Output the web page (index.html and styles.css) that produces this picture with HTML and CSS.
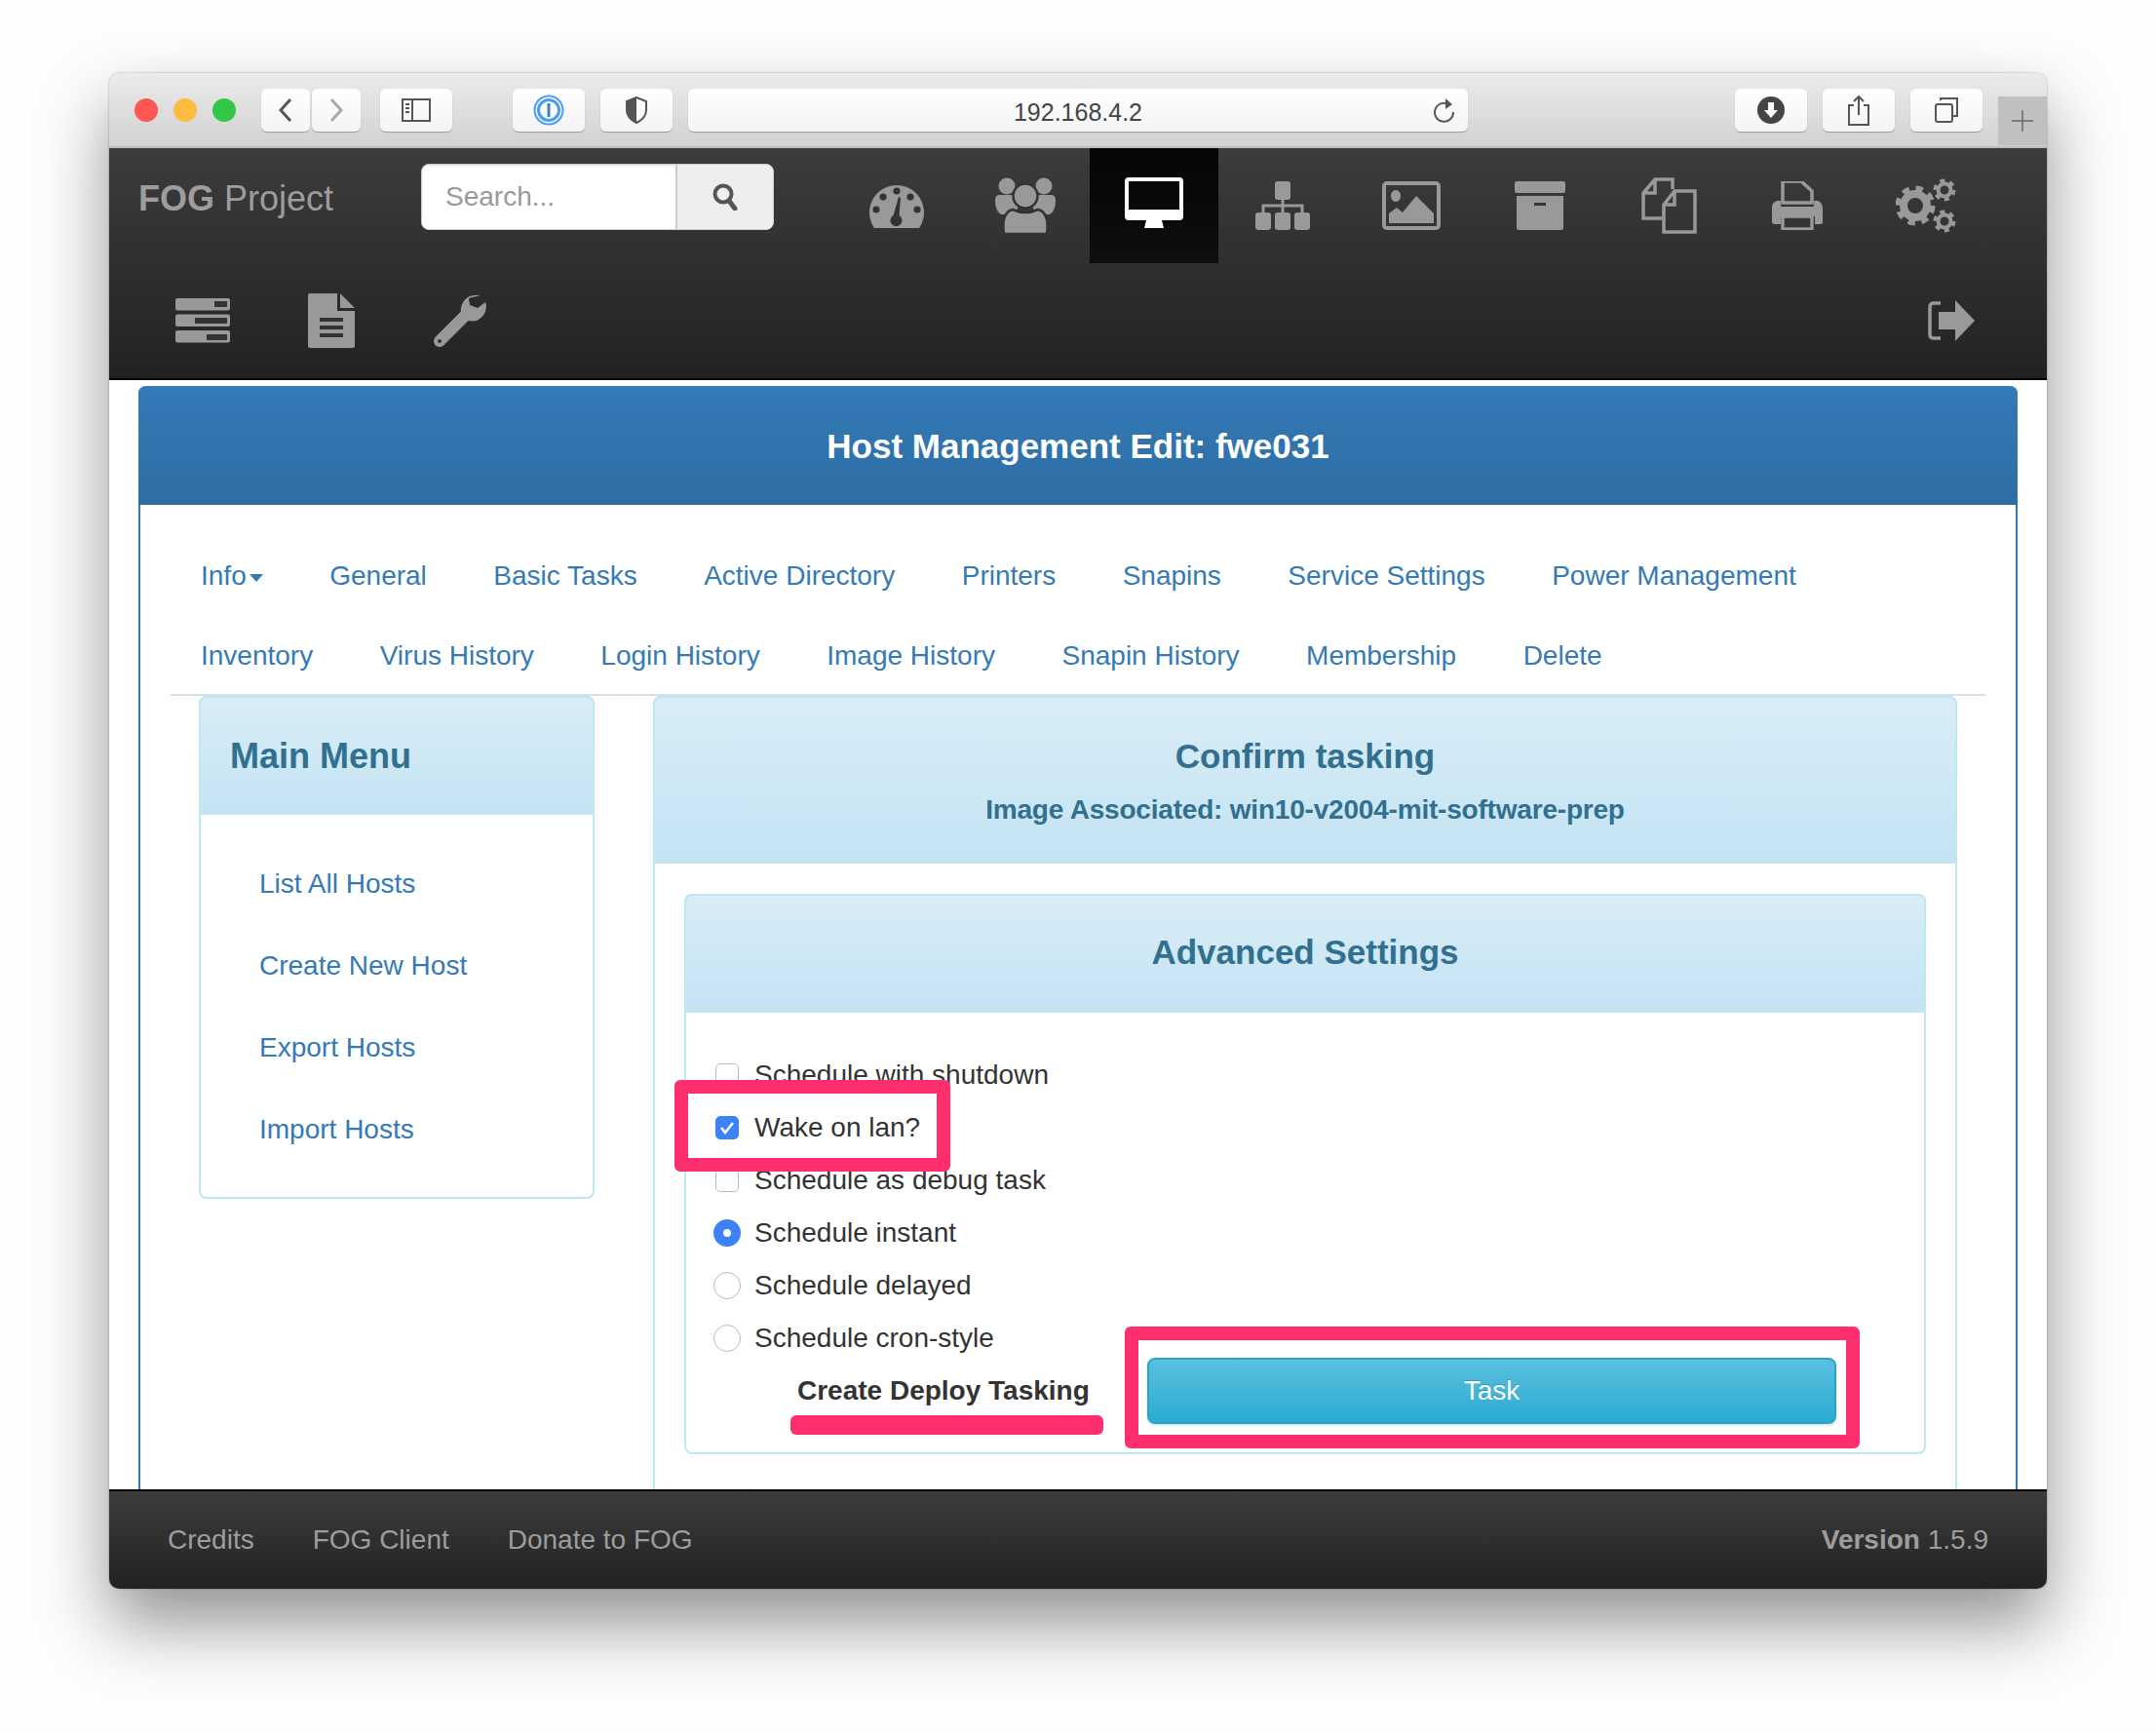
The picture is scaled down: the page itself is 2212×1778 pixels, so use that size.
FILE: index.html
```html
<!DOCTYPE html>
<html>
  <head>
    <title>FOG Project</title>
    <meta charset="utf-8">
    <link rel="stylesheet" href="styles.css">
  </head>
  <body>
    <div class="window">

      <div class="toolbar">
        <span class="light red"></span>
        <span class="light yellow"></span>
        <span class="light green"></span>
        <span class="tool back"><svg width="16" height="26" viewBox="0 0 16 26"><path d="M13 2 3 13l10 11" class="line"/></svg></span>
        <span class="tool forward"><svg width="16" height="26" viewBox="0 0 16 26"><path d="M3 2l10 11L3 24" class="line faint"/></svg></span>
        <span class="tool sidebar"><svg width="30" height="24" viewBox="0 0 30 24"><rect x="1" y="1" width="28" height="22" class="line thin"/><path d="M11 1v22" class="line thin"/><path d="M4 6h4M4 10h4M4 14h4" class="line thin"/></svg></span>
        <span class="tool onepass"><svg width="32" height="32" viewBox="0 0 32 32"><circle cx="16" cy="16" r="14.5" fill="none" stroke="#4a9cf5" stroke-width="2"/><circle cx="16" cy="16" r="10.5" fill="none" stroke="#4a9cf5" stroke-width="3"/><rect x="14.5" y="9" width="3" height="14" fill="#3b82d6"/></svg></span>
        <span class="tool shield"><svg width="24" height="28" viewBox="0 0 24 28"><path d="M12 1 2 5v9c0 6 4 10 10 13 6-3 10-7 10-13V5z" fill="none" stroke="#555" stroke-width="2"/><path d="M12 1 2 5v9c0 6 4 10 10 13z" fill="#555"/></svg></span>
        <span class="address">192.168.4.2
          <svg class="reload" width="24" height="26" viewBox="0 0 24 26"><path d="M17 7.5A9.5 9.5 0 1 0 21 15" class="line thin"/><path d="M13 1l7 6-7 5z" fill="#555"/></svg>
        </span>
        <span class="tool download"><svg width="28" height="28" viewBox="0 0 28 28"><circle cx="14" cy="14" r="14" fill="#444"/><path d="M11 6h6v8h4l-7 8-7-8h4z" fill="#fff"/></svg></span>
        <span class="tool share"><svg width="24" height="32" viewBox="0 0 24 32"><path d="M7 11H2v20h20V11h-5M12 21V2M7 7l5-5 5 5" class="line thin"/></svg></span>
        <span class="tool tabs"><svg width="26" height="26" viewBox="0 0 26 26"><rect x="2" y="7" width="17" height="18" rx="2" class="line thin"/><path d="M7 3V1h17v18h-4" class="line thin"/></svg></span>
        <span class="newtab"><svg width="22" height="22" viewBox="0 0 22 22"><path d="M11 0v22M0 11h22" stroke="#666" stroke-width="1.5"/></svg></span>
      </div>

      <nav class="topnav">
        <div class="nav-row">
          <a class="brand"><b>FOG</b> Project</a>
          <div class="search">
            <input type="text" placeholder="Search...">
            <span class="search-btn"><svg width="26" height="28" viewBox="0 0 26 28"><circle cx="11" cy="11" r="8.5" fill="none" stroke="#555" stroke-width="4"/><path d="M17 18l6 8" stroke="#555" stroke-width="5" stroke-linecap="round"/></svg></span>
          </div>
          <ul class="icons">
            <li><svg width="56" height="46" viewBox="0 0 56 46"><path d="M5 46A28 28 0 1 1 51 46z" class="ico"/><g class="hole"><circle cx="28" cy="8" r="3.6"/><circle cx="14" cy="14" r="3.6"/><circle cx="42" cy="14" r="3.6"/><circle cx="7" cy="27" r="3.6"/><circle cx="49" cy="27" r="3.6"/><path d="M30 14l2 1-1.500 18a6 6 0 1 1-6 0z"/></g></svg></li>
            <li><svg width="62" height="58" viewBox="0 0 62 58"><g class="ico"><circle cx="12" cy="9" r="8.500"/><circle cx="50" cy="9" r="8.500"/><path d="M0 24q0-6 4-6h16q8 6 0 20H6q-6-4-6-14zM62 24q0-6-4-6H42q-8 6 0 20h14q6-4 6-14z"/></g><g class="ico people-front"><circle cx="31" cy="19" r="12.500"/><path d="M9 58Q6 36 18 33 31 39 44 33 56 36 53 58z"/></g></svg></li>
            <li class="active"><svg width="60" height="52" viewBox="0 0 60 52"><path fill-rule="evenodd" d="M4 0h52q4 0 4 4v36q0 4-4 4H38l2 8H20l2-8H4q-4 0-4-4V4q0-4 4-4zM4 4v29h52V4z" fill="#fff"/></svg></li>
            <li><svg width="56" height="50" viewBox="0 0 56 50"><g class="ico"><rect x="20" y="0" width="16" height="19" rx="3"/><rect x="0" y="32" width="16" height="18" rx="3"/><rect x="20" y="32" width="16" height="18" rx="3"/><rect x="40" y="32" width="16" height="18" rx="3"/></g><path d="M28 18v14M8 32v-7h40v7" fill="none" stroke="#999" stroke-width="3"/></svg></li>
            <li><svg width="60" height="50" viewBox="0 0 60 50"><rect x="2" y="2" width="56" height="46" rx="3" fill="none" stroke="#999" stroke-width="4"/><g class="ico"><ellipse cx="14" cy="15" rx="5" ry="6"/><path d="M7 43V33l8-6 6 5 14-17 18 18v10z"/></g></svg></li>
            <li><svg width="52" height="50" viewBox="0 0 52 50"><g class="ico"><rect x="0" y="0" width="52" height="12" rx="2"/><path fill-rule="evenodd" d="M2 15h48v33q0 2-2 2H4q-2 0-2-2zM20 22v3h12v-3z"/></g></svg></li>
            <li><svg width="57" height="58" viewBox="0 0 57 58"><path d="M32 12V2H14L2 16v26h19M14 2v14H2" class="ico-line"/><path d="M34 14h21v42H23V28zM34 14v14H23" class="ico-line"/></svg></li>
            <li><svg width="52" height="50" viewBox="0 0 52 50"><path d="M11 0h19l11 10v12H11z" class="ico-line" stroke-width="3"/><path fill-rule="evenodd" d="M5 20h4v6h34v-6h4q5 2 5 8v14q0 2-3 2h-5v-8H9v8H4q-4 0-4-2V26q0-4 5-6z" class="ico"/><path d="M11 36h30v13H11z" class="ico-line" stroke-width="3"/></svg></li>
            <li><svg width="62" height="58" viewBox="0 0 62 58"><g fill="none" stroke="#999"><circle cx="20" cy="29" r="17" stroke-width="7" stroke-dasharray="7 6.350"/><circle cx="20" cy="29" r="12" stroke-width="8"/><circle cx="50" cy="13" r="9.500" stroke-width="4" stroke-dasharray="5 4.950"/><circle cx="50" cy="13" r="6.500" stroke-width="4"/><circle cx="50" cy="45" r="9.500" stroke-width="4" stroke-dasharray="5 4.950"/><circle cx="50" cy="45" r="6.500" stroke-width="4"/></g></svg></li>
          </ul>
        </div>
        <div class="nav-row">
          <ul class="icons">
            <li><svg width="56" height="46" viewBox="0 0 56 46"><g class="ico"><rect y="0" width="56" height="12.500" rx="2"/><rect y="16.500" width="56" height="12.500" rx="2"/><rect y="33" width="56" height="12.500" rx="2"/></g><g class="hole"><rect x="40" y="3" width="13" height="6"/><rect x="20" y="20" width="33" height="6"/><rect x="32" y="37" width="21" height="6"/></g></svg></li>
            <li><svg width="48" height="56" viewBox="0 0 48 56"><path d="M2 0h28v18h18v36q0 2-2 2H2q-2 0-2-2V2q0-2 2-2zM33 0l15 15H33z" class="ico"/><g class="hole"><rect x="12" y="25" width="24" height="4"/><rect x="12" y="33" width="24" height="4"/><rect x="12" y="41" width="24" height="4"/></g></svg></li>
            <li><svg width="54" height="54" viewBox="0 0 54 54"><path d="M6 48 32 22" stroke="#999" stroke-width="12" stroke-linecap="round"/><path d="M48 1Q34-1 29 10q-3 8 1 14 8 6 16 2 8-5 8-15l-1-3-8 6-8-3-1-7z" class="ico"/><circle cx="6" cy="48" r="2" class="hole"/></svg></li>
            <li class="logout"><svg width="50" height="42" viewBox="0 0 50 42"><path d="M14 3H7Q3 3 3 7v28q0 4 4 4h7" class="ico-line" stroke-width="5"/><path d="M12 12h17V0l20 21-20 21V30H12z" class="ico"/></svg></li>
          </ul>
        </div>
      </nav>

      <div class="content">
        <div class="page-panel">
          <h2 class="page-title">Host Management Edit: fwe031</h2>
          <ul class="tabs-nav">
            <li><a>Info<span class="caret"></span></a></li>
            <li><a>General</a></li>
            <li><a>Basic Tasks</a></li>
            <li><a>Active Directory</a></li>
            <li><a>Printers</a></li>
            <li><a>Snapins</a></li>
            <li><a>Service Settings</a></li>
            <li><a>Power Management</a></li>
            <li><a>Inventory</a></li>
            <li><a>Virus History</a></li>
            <li><a>Login History</a></li>
            <li><a>Image History</a></li>
            <li><a>Snapin History</a></li>
            <li><a>Membership</a></li>
            <li><a>Delete</a></li>
          </ul>

          <div class="columns">
            <div class="panel side">
              <div class="panel-head left"><h3>Main Menu</h3></div>
              <ul class="side-menu">
                <li><a>List All Hosts</a></li>
                <li><a>Create New Host</a></li>
                <li><a>Export Hosts</a></li>
                <li><a>Import Hosts</a></li>
              </ul>
            </div>

            <div class="panel main">
              <div class="panel-head confirm">
                <h3>Confirm tasking</h3>
                <p>Image Associated: win10-v2004-mit-software-prep</p>
              </div>
              <div class="main-body">
                <div class="panel inner">
                  <div class="panel-head"><h3>Advanced Settings</h3></div>
                  <div class="options">
                    <div class="opt"><span class="mark"><span class="check"></span></span>Schedule with shutdown</div>
                    <div class="opt"><span class="mark"><span class="check on"><svg width="16" height="14" viewBox="0 0 16 14"><path d="M2 7l4 5 8-10" fill="none" stroke="#fff" stroke-width="2.500"/></svg></span></span>Wake on lan?</div>
                    <div class="opt"><span class="mark"><span class="check"></span></span>Schedule as debug task</div>
                    <div class="opt"><span class="mark"><span class="radio on"></span></span>Schedule instant</div>
                    <div class="opt"><span class="mark"><span class="radio"></span></span>Schedule delayed</div>
                    <div class="opt"><span class="mark"><span class="radio"></span></span>Schedule cron-style</div>
                  </div>
                  <div class="task-row">
                    <label>Create Deploy Tasking</label>
                    <button type="submit">Task</button>
                  </div>
                </div>
              </div>
            </div>
          </div>
        </div>
      </div>

      <footer class="footer">
        <a>Credits</a>
        <a>FOG Client</a>
        <a>Donate to FOG</a>
        <span class="version"><b>Version</b> 1.5.9</span>
      </footer>

      <div class="mark-box wake"></div>
      <div class="mark-box task"></div>
      <div class="mark-line"></div>
    </div>
  </body>
</html>
```

FILE: styles.css
```css
* {
  box-sizing: border-box;
}
body {
  margin: 0;
  height: 1778px;
  background: #fdfdfd;
  font-family: "Liberation Sans", Arial, sans-serif;
  font-size: 28px;
  color: #333;
  overflow: hidden;
}
ul {
  list-style: none;
  margin: 0;
  padding: 0;
}
.line {
  fill: none;
  stroke: #555;
  stroke-width: 3;
}
.line.faint {
  stroke: #aaa;
}
.line.thin {
  stroke-width: 2;
}
.ico {
  fill: #999;
}
.ico-line {
  fill: none;
  stroke: #999;
  stroke-width: 3.500;
}
.people-front {
  stroke: #333;
  stroke-width: 2.500;
}
.hole {
  fill: #333;
}

/* window */
.window {
  position: relative;
  width: 1988px;
  height: 1555px;
  margin: 75px 0 0 112px;
  border-radius: 10px;
  overflow: hidden;
  display: flex;
  flex-direction: column;
}
body::before {
  content: "";
  position: absolute;
  left: 112px;
  top: 75px;
  width: 1988px;
  height: 1555px;
  border-radius: 10px;
  box-shadow: 0 36px 70px rgba(0, 0, 0, .42), 0 0 2px rgba(0, 0, 0, .4);
}

/* browser toolbar */
.toolbar {
  flex: none;
  height: 77px;
  background: linear-gradient(#ebebeb, #d2d2d2);
  border-bottom: 2px solid #bcbcbc;
  display: flex;
  padding: 16px 0 0 26px;
  position: relative;
}
.light {
  width: 24px;
  height: 24px;
  border-radius: 50%;
  margin: 10px 16px 0 0;
}
.light.red { background: #fc5753; }
.light.yellow { background: #fdbc40; }
.light.green { background: #33c748; margin-right: 26px; }
.tool, .address {
  height: 44px;
  background: linear-gradient(#fff, #f4f4f4);
  border-radius: 6px;
  box-shadow: 0 1px 1px rgba(0, 0, 0, .3);
  display: flex;
  align-items: center;
  justify-content: center;
}
.tool {
  width: 74px;
  margin-right: 16px;
}
.tool.back, .tool.forward {
  width: 50px;
}
.tool.back { margin-right: 2px; }
.tool.forward { margin-right: 20px; }
.tool.sidebar { margin-right: 62px; }
.address {
  width: 800px;
  margin-right: 274px;
  font-size: 25px;
  color: #444;
  position: relative;
  padding-top: 4px;
}
.reload {
  position: absolute;
  right: 12px;
  top: 9px;
}
.newtab {
  position: absolute;
  right: 0;
  top: 24px;
  width: 50px;
  height: 50px;
  background: #c0c0c0;
  display: flex;
  align-items: center;
  justify-content: center;
}

/* dark top nav */
.topnav {
  flex: none;
  height: 238px;
  background: linear-gradient(#3c3c3c, #222);
  border-bottom: 2px solid #000;
}
.nav-row {
  display: flex;
  height: 118px;
  padding-left: 30px;
}
.brand {
  width: 290px;
  font-size: 36px;
  color: #9d9d9d;
  line-height: 104px;
}
.search {
  display: flex;
  width: 362px;
  height: 68px;
  margin: 16px 60px 0 0;
  border: 1px solid #ccc;
  border-radius: 8px;
  overflow: hidden;
  background: #fff;
}
.search input {
  width: 260px;
  border: 0;
  padding: 0 24px;
  font: 28px "Liberation Sans", Arial, sans-serif;
  box-shadow: inset 0 2px 2px rgba(0, 0, 0, .07);
}
.search input::placeholder {
  color: #999;
}
.search-btn {
  flex: 1;
  background: #eee;
  border-left: 2px solid #ccc;
  display: flex;
  align-items: center;
  justify-content: center;
}
.icons {
  display: flex;
  flex: 1;
}
.icons li {
  width: 132px;
  height: 118px;
  display: flex;
  align-items: center;
  justify-content: center;
}
.icons li.active {
  background: linear-gradient(#050505, #0e0e0e);
  padding-bottom: 6px;
}
.icons li.logout {
  margin: 0 32px 0 auto;
}

/* page content */
.content {
  flex: 1;
  min-height: 0;
  overflow: hidden;
  background: #fff;
  padding: 6px 30px 0;
}
.page-panel {
  width: 1928px;
  border: 2px solid #337ab7;
  border-top: 0;
  border-radius: 8px 8px 0 0;
}
.page-title {
  margin: 0 -2px;
  height: 122px;
  background: linear-gradient(#337ab7, #2e6da4);
  border-radius: 8px 8px 0 0;
  color: #fff;
  font-size: 35px;
  line-height: 124px;
  text-align: center;
}
.tabs-nav {
  display: flex;
  flex-wrap: wrap;
  row-gap: 2px;
  column-gap: 6.500px;
  margin: 32px 31px 0;
  border-bottom: 2px solid #ddd;
}
.tabs-nav a {
  display: block;
  padding: 21px 31px 19px;
  line-height: 40px;
  color: #337ab7;
}
.caret {
  display: inline-block;
  margin-left: 3px;
  vertical-align: middle;
  border-top: 8px solid #337ab7;
  border-left: 7px solid transparent;
  border-right: 7px solid transparent;
}
.columns {
  display: flex;
  align-items: flex-start;
  padding-left: 60px;
}
.panel {
  border: 2px solid #bce8f1;
  border-radius: 8px;
  background: #fff;
}
.panel-head {
  margin: -2px -2px 0;
  height: 122px;
  background: linear-gradient(#d9edf7, #c4e3f3);
  border-radius: 8px 8px 0 0;
  color: #31708f;
  text-align: center;
  border: 2px solid #bce8f1;
  border-bottom: 0;
}
.panel-head h3 {
  margin: 0;
  padding-top: 40px;
  font-size: 35px;
  line-height: 40px;
}
.inner .panel-head h3 {
  padding-top: 38px;
}
.panel-head.left {
  text-align: left;
  padding-left: 30px;
}
.panel-head.left h3 {
  font-size: 36px;
}
.panel-head.confirm {
  height: 172px;
}
.panel-head.confirm p {
  margin: 15px 0 0;
  line-height: 40px;
  font-weight: bold;
  letter-spacing: -.2px;
}
.side {
  width: 406px;
  margin-right: 60px;
}
.side-menu {
  padding: 29px 0 27px 60px;
}
.side-menu a {
  display: block;
  line-height: 84px;
  color: #337ab7;
}
.main {
  width: 1338px;
  height: 1000px;
}
.main-body {
  padding: 31px 30px;
}
.options {
  padding: 44px 0 0 28px;
}
.opt {
  display: flex;
  align-items: center;
  height: 40px;
  margin-bottom: 14px;
  white-space: nowrap;
}
.opt:last-child {
  margin-bottom: 0;
}
.mark {
  width: 28px;
  margin-right: 14px;
  display: flex;
  justify-content: center;
}
.check {
  width: 24px;
  height: 24px;
  border: 1.500px solid #bbb;
  border-radius: 5px;
  background: #fff;
  display: flex;
  align-items: center;
  justify-content: center;
}
.check.on {
  background: #3b82f6;
  border-color: #3b82f6;
}
.radio {
  width: 28px;
  height: 28px;
  border: 1.500px solid #bbb;
  border-radius: 50%;
  background: #fff;
}
.radio.on {
  border: 10px solid #3b82f6;
}
.task-row {
  display: flex;
  align-items: center;
  padding: 0 90px 29px 114px;
}
.task-row label {
  width: 299px;
  margin-right: 60px;
  font-weight: bold;
  white-space: nowrap;
}
.task-row button {
  flex: 1;
  height: 68px;
  border: 2px solid #28a4c9;
  border-radius: 8px;
  background: linear-gradient(#5bc0de, #2aabd2);
  box-shadow: 0 2px 3px rgba(0, 0, 0, .1);
  color: #fff;
  font: 28px "Liberation Sans", Arial, sans-serif;
  text-shadow: 0 -1px 0 rgba(0, 0, 0, .2);
}

/* footer */
.footer {
  flex: none;
  height: 102px;
  background: linear-gradient(#3c3c3c, #222);
  border-top: 2px solid #000;
  color: #9d9d9d;
  display: flex;
  align-items: center;
  gap: 60px;
  padding: 0 60px;
}
.version {
  margin-left: auto;
}

/* pink annotations laid over the screenshot */
.mark-box, .mark-line {
  position: absolute;
  border-radius: 6px;
}
.mark-box {
  border: 14px solid #ff2f6e;
}
.mark-box.wake {
  left: 580px;
  top: 1033px;
  width: 283px;
  height: 94px;
}
.mark-box.task {
  left: 1042px;
  top: 1286px;
  width: 754px;
  height: 125px;
}
.mark-line {
  left: 699px;
  top: 1377px;
  width: 321px;
  height: 20px;
  background: #ff2f6e;
}
```
